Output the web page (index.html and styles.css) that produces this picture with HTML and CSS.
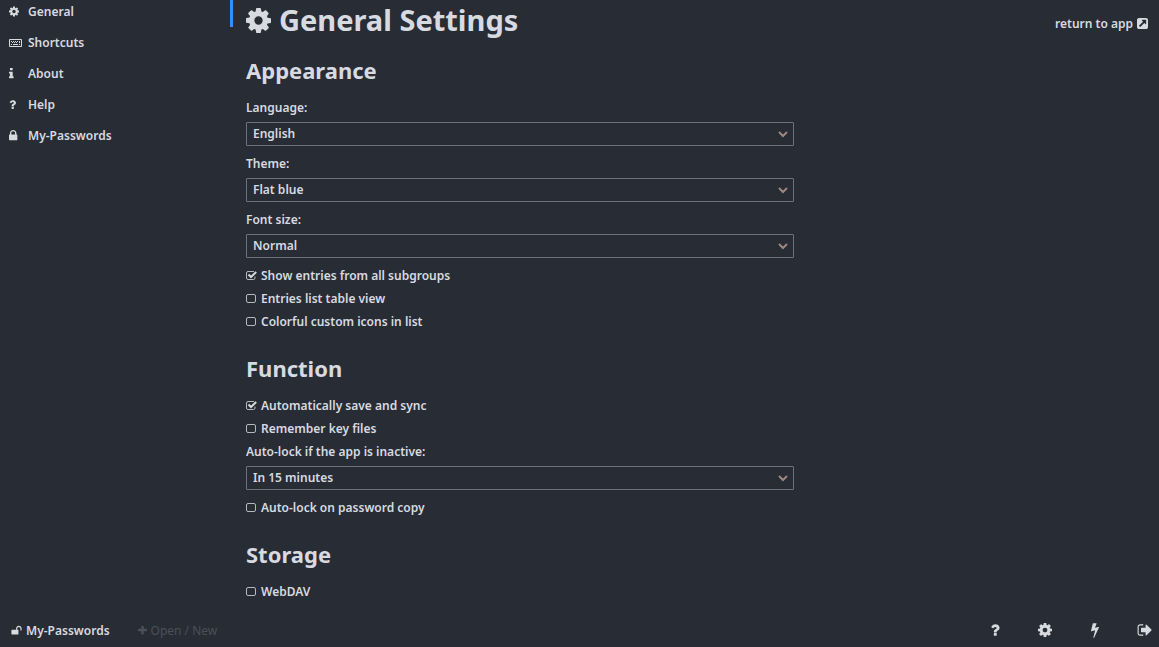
FILE: index.html
```
<!DOCTYPE html>
<html lang="en">
<head>
  <meta charset="UTF-8">
  <meta name="viewport" content="width=device-width, initial-scale=1.0">
  <title>General Settings</title>
  <link rel="stylesheet" href="styles.css">
</head>
<body>
  <!-- shared icons -->
  <svg class="sprite" aria-hidden="true">
    <symbol id="cog" viewBox="128 128 1536 1536"><path d="M1152 896q0-106-75-181t-181-75-181 75-75 181 75 181 181 75 181-75 75-181zm512-109v222q0 12-8 23t-20 13l-185 28q-19 54-39 91 35 50 107 138 10 12 10 25t-9 23q-27 37-99 108t-94 71q-12 0-26-9l-138-108q-44 23-91 38-16 136-29 186-7 28-36 28h-222q-14 0-24.5-8.5t-11.5-21.5l-28-184q-49-16-90-37l-141 107q-10 9-25 9-14 0-25-11-126-114-165-168-7-10-7-23 0-12 8-23 15-21 51-66.5t54-70.5q-27-50-41-99l-183-27q-13-2-21-12.5t-8-23.5v-222q0-12 8-23t19-13l186-28q14-46 39-92-40-57-107-138-10-12-10-24 0-10 9-23 26-36 98.5-107.5t94.5-71.5q13 0 26 10l138 107q44-23 91-38 16-136 29-186 7-28 36-28h222q14 0 24.5 8.5t11.5 21.5l28 184q49 16 90 37l142-107q9-9 24-9 13 0 25 10 129 119 165 170 7 8 7 22 0 12-8 23-15 21-51 66.5t-54 70.5q26 50 41 98l183 28q13 2 21 12.5t8 23.5z"/></symbol>
    <symbol id="question" viewBox="384 0 1024 1792"><path d="M1088 1256v240q0 16-12 28t-28 12h-240q-16 0-28-12t-12-28v-240q0-16 12-28t28-12h240q16 0 28 12t12 28zm316-600q0 54-15.5 101t-35 76.5-55 59.5-57.5 43.5-61 35.5q-41 23-68.5 65t-27.5 67q0 17-12 32.5t-28 15.5h-240q-15 0-25.5-18.5t-10.5-37.5v-45q0-83 65-156.5t143-108.5q59-27 84-56t25-76q0-42-46.5-74t-107.5-32q-65 0-108 29-35 25-107 115-13 16-31 16-12 0-25-8l-164-125q-13-10-15.5-25t5.5-28q160-266 464-266 80 0 161 31t146 83 106 127.5 41 158.5z"/></symbol>
  </svg>

  <div class="app">
    <nav class="menu">
      <a class="menu-item" href="#general"><svg class="icon icon-cog"><use href="#cog"/></svg>General</a>
      <a class="menu-item" href="#shortcuts">
        <svg class="icon" viewBox="0 0 13 13"><path fill-rule="evenodd" d="M1 3h11q1 0 1 1v6q0 1-1 1H1q-1 0-1-1V4q0-1 1-1zm0 1v6h11V4z"/><path d="M2 5h1v1H2zM4 5h1v1H4zM6 5h1v1H6zM8 5h1v1H8zM10 5h1v2h-1zM3 6h1v1H3zM5 6h1v1H5zM7 6h1v1H7zM2 8h1v1H2zM4 8h5v1H4zM10 8h1v1h-1z"/></svg>Shortcuts</a>
      <a class="menu-item" href="#about"><svg class="icon" viewBox="576 0 1792 1792"><path d="M1216 1344v128q0 26-19 45t-45 19h-512q-26 0-45-19t-19-45v-128q0-26 19-45t45-19h64v-384h-64q-26 0-45-19t-19-45v-128q0-26 19-45t45-19h384q26 0 45 19t19 45v576h64q26 0 45 19t19 45zm-128-1152v192q0 26-19 45t-45 19h-256q-26 0-45-19t-19-45v-192q0-26 19-45t45-19h256q26 0 45 19t19 45z"/></svg>About</a>
      <a class="menu-item" href="#help"><svg class="icon icon-left"><use href="#question"/></svg>Help</a>
      <a class="menu-item" href="#file"><svg class="icon" viewBox="320 0 1792 1792"><path d="M640 768h512v-192q0-106-75-181t-181-75-181 75-75 181v192zm832 96v576q0 40-28 68t-68 28h-960q-40 0-68-28t-28-68v-576q0-40 28-68t68-28h32v-192q0-184 132-316t316-132 316 132 132 316v192h32q40 0 68 28t28 68z"/></svg>My-Passwords</a>
    </nav>
    <div class="scrollbar"></div>

    <main class="settings">
      <header class="settings-head">
        <h1><svg class="icon-title"><use href="#cog"/></svg>General Settings</h1>
        <a class="return" href="#app">return to app
          <svg class="icon-small" viewBox="128 128 1536 1536"><path d="M1408 928v-480q0-26-19-45t-45-19h-480q-42 0-59 39-17 41 14 70l144 144-534 534q-19 19-19 45t19 45l102 102q19 19 45 19t45-19l534-534 144 144q18 19 45 19 12 0 25-5 39-17 39-59zm256-512v960q0 119-84.5 203.5t-203.5 84.5h-960q-119 0-203.5-84.5t-84.5-203.5v-960q0-119 84.5-203.5t203.5-84.5h960q119 0 203.5 84.5t84.5 203.5z"/></svg></a>
      </header>

      <h2>Appearance</h2>
      <label class="row" for="language">Language:</label>
      <select id="language"><option>English</option></select>
      <label class="row" for="theme">Theme:</label>
      <select id="theme"><option>Flat blue</option></select>
      <label class="row" for="font-size">Font size:</label>
      <select id="font-size"><option>Normal</option></select>
      <div class="row"><input type="checkbox" id="subgroups" checked><label for="subgroups">Show entries from all subgroups</label></div>
      <div class="row"><input type="checkbox" id="table-view"><label for="table-view">Entries list table view</label></div>
      <div class="row"><input type="checkbox" id="colorful"><label for="colorful">Colorful custom icons in list</label></div>

      <h2>Function</h2>
      <div class="row"><input type="checkbox" id="autosave" checked><label for="autosave">Automatically save and sync</label></div>
      <div class="row"><input type="checkbox" id="key-files"><label for="key-files">Remember key files</label></div>
      <label class="row" for="idle">Auto-lock if the app is inactive:</label>
      <select id="idle"><option>In 15 minutes</option></select>
      <div class="row"><input type="checkbox" id="lock-copy"><label for="lock-copy">Auto-lock on password copy</label></div>

      <h2>Storage</h2>
      <div class="row"><input type="checkbox" id="webdav"><label for="webdav">WebDAV</label></div>
    </main>
  </div>

  <footer class="footer">
    <button class="footer-file"><svg class="icon-small" viewBox="0 0 1792 1792"><path d="M1728 576v256q0 26-19 45t-45 19h-64q-26 0-45-19t-19-45v-256q0-106-75-181t-181-75-181 75-75 181v192h96q40 0 68 28t28 68v576q0 40-28 68t-68 28h-960q-40 0-68-28t-28-68v-576q0-40 28-68t68-28h672v-192q0-185 131.5-316.5t316.5-131.5 316.5 131.5 131.5 316.5z"/></svg>My-Passwords</button>
    <button class="footer-open"><svg class="icon-plus" viewBox="192 192 1408 1408"><path d="M1600 736v192q0 40-28 68t-68 28h-416v416q0 40-28 68t-68 28h-192q-40 0-68-28t-28-68v-416h-416q-40 0-68-28t-28-68v-192q0-40 28-68t68-28h416v-416q0-40 28-68t68-28h192q40 0 68 28t28 68v416h416q40 0 68 28t28 68z"/></svg>Open / New</button>
    <div class="footer-tools">
      <button aria-label="Help"><svg class="icon-tool"><use href="#question"/></svg></button>
      <button aria-label="Settings"><svg class="icon-tool icon-tool-cog"><use href="#cog"/></svg></button>
      <button aria-label="Generate"><svg class="icon-tool" viewBox="0 0 1792 1792"><path d="M1333 566q18 20 7 44l-540 1157q-13 25-42 25-4 0-14-2-17-5-25.5-19t-4.5-30l197-808-406 101q-4 1-12 1-18 0-31-11-18-15-13-39l201-825q4-14 16-23t28-9h328q19 0 32 12.5t13 29.5q0 8-5 18l-171 463 396-98q8-2 12-2 19 0 34 15z"/></svg></button>
      <button aria-label="Lock"><svg class="icon-tool" viewBox="0 0 1792 1792"><path d="M704 1440q0 4 1 20t.5 26.5-3 23.5-10 19.5-20.5 6.5h-320q-119 0-203.5-84.5t-84.5-203.5v-704q0-119 84.5-203.5t203.5-84.5h320q13 0 22.5 9.5t9.5 22.5q0 4 1 20t.5 26.5-3 23.5-10 19.5-20.5 6.5h-320q-66 0-113 47t-47 113v704q0 66 47 113t113 47h312l11.5 1 11.5 3 8 5.5 7 9 2 13.5zm928-544q0 26-19 45l-544 544q-19 19-45 19t-45-19-19-45v-288h-448q-26 0-45-19t-19-45v-384q0-26 19-45t45-19h448v-288q0-26 19-45t45-19 45 19l544 544q19 19 19 45z"/></svg></button>
    </div>
  </footer>
</body>
</html>
```
FILE: styles.css
```
* {
  box-sizing: border-box;
}

body {
  margin: 0;
  height: 100vh;
  display: flex;
  flex-direction: column;
  background-color: #282c34;
  color: #d7dae0;
  font-family: "Noto Sans", "Open Sans", sans-serif;
  font-size: 12px;
  font-weight: 600;
}

a {
  color: inherit;
  text-decoration: none;
}

button {
  display: flex;
  align-items: center;
  padding: 0;
  border: 0;
  background: none;
  color: inherit;
  font: inherit;
  cursor: pointer;
}

svg {
  flex: none;
  fill: currentColor;
}

.sprite {
  display: none;
}

.app {
  flex: 1;
  min-height: 0;
  display: flex;
}

.menu {
  width: 230px;
  flex: none;
}

.menu-item {
  display: flex;
  align-items: center;
  gap: 6px;
  height: 31px;
  padding-left: 9px;
}

.menu-item:first-child {
  height: 27px;
  padding-bottom: 4px;
}

.icon {
  width: 13px;
  height: 13px;
}

.icon-cog {
  width: 10px;
  margin-right: 3px;
}

.icon-left {
  width: 7px;
  margin-right: 6px;
}

.icon-small {
  width: 11px;
  height: 11px;
}

.icon-plus {
  width: 9px;
  height: 9px;
}

.icon-title {
  width: 25px;
  height: 25px;
}

.icon-tool {
  width: 16px;
  height: 16px;
}

.icon-tool-cog {
  padding: 1px;
}

.scrollbar {
  width: 3px;
  height: 27px;
  background-color: #3090ff;
}

.settings {
  flex: 1;
  padding-left: 13px;
  overflow: auto;
}

.settings-head {
  display: flex;
  justify-content: space-between;
  align-items: flex-start;
}

h1 {
  display: flex;
  align-items: center;
  gap: 8px;
  margin: 0;
  font-size: 29px;
  line-height: 40px;
}

h2 {
  margin: 20px 0 11px;
  font-size: 22px;
  line-height: 30px;
}

.settings-head + h2 {
  margin-top: 15px;
}

.return {
  display: flex;
  align-items: center;
  gap: 4px;
  padding: 15px 11px 0 0;
}

.row {
  display: flex;
  align-items: center;
  gap: 4px;
  height: 23px;
}

select {
  appearance: none;
  display: block;
  width: 60%;
  height: 24px;
  margin: 3px 0 6px;
  padding: 0 6px 2px;
  border: 1px solid #6b717d;
  border-radius: 1px;
  background: url("data:image/svg+xml,%3Csvg xmlns='http://www.w3.org/2000/svg' width='10' height='7'%3E%3Cpath d='M1 1l4 4 4-4' fill='none' stroke='%23a08583' stroke-width='2'/%3E%3C/svg%3E") no-repeat right 5px center;
  color: inherit;
  font: inherit;
}

input[type="checkbox"] {
  appearance: none;
  width: 11px;
  height: 11px;
  margin: 0;
  background: url("data:image/svg+xml,%3Csvg xmlns='http://www.w3.org/2000/svg' width='11' height='11'%3E%3Crect x='.5' y='1.5' width='9' height='8' rx='1.5' fill='none' stroke='%23b5b8bf'/%3E%3C/svg%3E") no-repeat;
}

input[type="checkbox"]:checked {
  background-image: url("data:image/svg+xml,%3Csvg xmlns='http://www.w3.org/2000/svg' width='11' height='11'%3E%3Cpath d='M8 1.5H2Q.5 1.5.5 3v5Q.5 9.5 2 9.5h5.5Q9 9.5 9 8V6.500' fill='none' stroke='%23b5b8bf'/%3E%3Cpath d='M2.500 4.500l2.500 2.500 5.200-5' fill='none' stroke='%23d7dae0' stroke-width='2'/%3E%3C/svg%3E");
}

.footer {
  flex: none;
  display: flex;
  align-items: center;
  height: 34px;
  padding: 0 6px 0 11px;
}

.footer-file,
.footer-open {
  gap: 4px;
}

.footer-file {
  margin-right: 28px;
}

.footer-open {
  color: #4b5059;
  font-weight: 400;
}

.footer-tools {
  display: flex;
  gap: 34px;
  margin-left: auto;
}
```
